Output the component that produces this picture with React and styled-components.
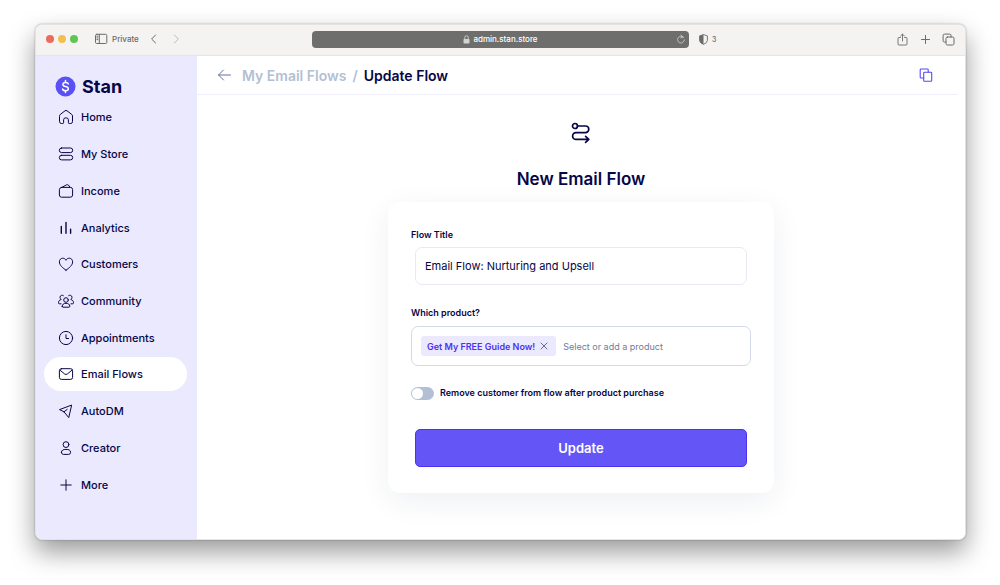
import React, { useState } from "react";
import styled, { createGlobalStyle } from "styled-components";

const GlobalStyle = createGlobalStyle`
  * {
    box-sizing: border-box;
  }

  body {
    margin: 0;
    background: #fff;
    color: #060648;
    font-family: Inter, "Liberation Sans", sans-serif;
  }

  button, input {
    font-family: inherit;
  }
`;

const Desktop = styled.div`
  min-height: 100vh;
  padding: 24px 34px 45px 35px;
`;

const BrowserWindow = styled.div`
  border: 1px solid #e3e3e3;
  border-radius: 7px;
  overflow: hidden;
  background: #fff;
  box-shadow: 0 0 2px rgba(0, 0, 0, 0.3), 0 12px 26px rgba(0, 0, 0, 0.4);
`;

const Toolbar = styled.div`
  display: grid;
  grid-template-columns: 1fr 377px 1fr;
  align-items: center;
  height: 31px;
  padding-bottom: 2px;
  background: #f4f3f1;
  border-bottom: 1px solid #e6e5e3;
`;

const ToolbarSide = styled.div`
  display: flex;
  align-items: center;
  justify-content: ${(props) => (props.$split ? "space-between" : "flex-start")};
  padding: 0 10px;
  color: #6b6b69;
`;

const Lights = styled.div`
  display: flex;
  gap: 4px;
  margin-right: 16px;
`;

const Light = styled.span`
  width: 8px;
  height: 8px;
  border-radius: 50%;
  background: ${(props) => props.$color};
`;

const ToolButton = styled.button`
  display: flex;
  align-items: center;
  padding: 0;
  border: 0;
  background: none;
  color: ${(props) => props.$color || "#6b6b69"};
`;

const PrivateLabel = styled.span`
  margin: 0 10px 0 4px;
  font-size: 8px;
  font-weight: 500;
`;

const ToolGroup = styled.div`
  display: flex;
  align-items: center;
  gap: ${(props) => props.$gap}px;
`;

const Tracker = styled.span`
  font-size: 7px;
  font-weight: 500;
`;

const AddressBar = styled.div`
  display: grid;
  grid-template-columns: 13px 1fr 13px;
  align-items: center;
  height: 17px;
  border-radius: 4px;
  background: #6e6e6c;
  color: #fff;
`;

const Address = styled.span`
  display: flex;
  align-items: center;
  justify-content: center;
  gap: 3px;
  font-size: 8px;
  font-weight: 500;
`;

const Layout = styled.div`
  display: grid;
  grid-template-columns: 161px 1fr;
`;

const Sidebar = styled.aside`
  padding: 18px 10px 36px 8px;
  background: #ebe9fd;
`;

const Brand = styled.a`
  display: flex;
  align-items: center;
  gap: 6px;
  height: 25px;
  margin-left: 11px;
  color: inherit;
  font-size: 18px;
  font-weight: 700;
  text-decoration: none;
`;

const NavList = styled.nav`
  display: grid;
  grid-auto-rows: 1fr;
  align-items: center;
  height: 404px;
`;

const NavItem = styled.a`
  display: flex;
  align-items: center;
  gap: 7px;
  height: 34px;
  padding-left: 14px;
  border-radius: 17px;
  background: ${(props) => (props.$active ? "#fff" : "transparent")};
  color: #060648;
  font-size: 11px;
  font-weight: 500;
  text-decoration: none;
`;

const Main = styled.main`
  display: flex;
  flex-direction: column;
  background: #fff;
`;

const Header = styled.header`
  display: flex;
  align-items: center;
  justify-content: space-between;
  height: 39px;
  margin-right: 7px;
  padding: 0 25px 0 20px;
  border-bottom: 1px solid #f0effb;
`;

const Breadcrumb = styled.nav`
  display: flex;
  align-items: center;
  gap: 6px;
  color: #b3bfd3;
  font-size: 14px;
  font-weight: 600;

  a {
    color: inherit;
    text-decoration: none;
  }

  b {
    color: #060648;
    font-weight: 600;
  }
`;

const BackLink = styled.a`
  display: flex;
  margin-right: 4px;
`;

const Content = styled.div`
  display: flex;
  flex-direction: column;
  align-items: center;
  padding: 26px 20px 40px;
`;

const Title = styled.h1`
  margin: 22px 0 11px;
  font-size: 17px;
  line-height: 24px;
  font-weight: 600;
`;

const Card = styled.form`
  width: 100%;
  max-width: 386px;
  padding: 26px 23px;
  border-radius: 12px;
  background: #fff;
  box-shadow: 0 8px 30px rgba(30, 40, 90, 0.07);
`;

const Label = styled.label`
  display: block;
  font-size: 9px;
  line-height: 14px;
  font-weight: 600;
`;

const TitleInput = styled.input`
  display: block;
  width: calc(100% - 8px);
  height: 38px;
  margin: 5px 4px 21px;
  padding: 0 9px;
  border: 1px solid #e9e9f3;
  border-radius: 7px;
  background: #fff;
  color: #060648;
  font-size: 11px;
  outline: none;
`;

const ProductBox = styled.div`
  display: flex;
  align-items: center;
  gap: 7px;
  height: 40px;
  margin: 6px 0 20px;
  padding: 0 9px;
  border: 1px solid #d3d9e8;
  border-radius: 7px;
`;

const Tag = styled.span`
  display: flex;
  align-items: center;
  gap: 5px;
  height: 20px;
  padding: 0 8px 0 6px;
  border-radius: 3px;
  background: #ebe9fd;
  color: #4b31f2;
  font-size: 9px;
  font-weight: 600;
  white-space: nowrap;
`;

const ProductInput = styled.input`
  flex: 1;
  min-width: 0;
  padding: 0;
  border: 0;
  background: none;
  font-size: 9px;
  outline: none;

  &::placeholder {
    color: #737a9c;
    opacity: 1;
  }
`;

const SwitchRow = styled.div`
  display: flex;
  align-items: center;
  gap: 6px;
  height: 14px;
`;

const Switch = styled.input`
  appearance: none;
  display: flex;
  align-items: center;
  width: 23px;
  height: 13px;
  margin: 0;
  padding: 0 1px;
  border-radius: 7px;
  background: #b3c0d4;

  &::before {
    content: "";
    width: 11px;
    height: 11px;
    border-radius: 50%;
    background: #fff;
  }

  &:checked {
    justify-content: flex-end;
    background: #6355f6;
  }
`;

const UpdateButton = styled.button`
  display: block;
  width: calc(100% - 8px);
  height: 38px;
  margin: 29px 4px 0;
  border: 1px solid #4b31f2;
  border-radius: 5px;
  background: #6355f6;
  color: #fff;
  font-size: 13px;
  font-weight: 600;
`;

const Svg = ({ size = 16, width = 1, box = 16, children }) => (
  <svg
    width={size}
    height={size}
    viewBox={`0 0 ${box} ${box}`}
    fill="none"
    stroke="currentColor"
    strokeWidth={width}
    strokeLinecap="round"
    strokeLinejoin="round"
    aria-hidden="true"
  >
    {children}
  </svg>
);

const navItems = [
  {
    name: "Home",
    icon: <path d="M1.5 7 Q1.5 6 2.3 5.4 L7 1.8 Q8 1.1 9 1.8 L13.7 5.4 Q14.5 6 14.5 7 V12.6 Q14.5 14.5 12.6 14.5 H11.2 Q10.4 14.5 10.4 13.7 V10.8 Q10.4 8.8 8 8.8 T5.6 10.8 V13.7 Q5.6 14.5 4.8 14.5 H3.4 Q1.5 14.5 1.5 12.6Z" />,
  },
  {
    name: "My Store",
    icon: (
      <>
        <rect x="1.3" y="2" width="13.4" height="4.6" rx="2.3" />
        <rect x="1.3" y="9.3" width="13.4" height="4.6" rx="2.3" />
      </>
    ),
  },
  {
    name: "Income",
    icon: (
      <>
        <rect x="1.4" y="4.4" width="13.2" height="9.8" rx="2.2" />
        <path d="M4.2 4.2 L8.6 1.8 Q9.5 1.4 10.4 2 L12 4.2" />
      </>
    ),
  },
  { name: "Analytics", icon: <path d="M3.3 6.4v6.8M8 2.5v10.7M12.6 9.3v3.9" strokeWidth="1.4" /> },
  {
    name: "Customers",
    icon: <path d="M8 14.2C5 12 1.4 9.4 1.4 5.8C1.4 3.7 2.8 2.2 4.7 2.2C6.2 2.2 7.4 3 8 4.3C8.6 3 9.8 2.2 11.3 2.2C13.2 2.2 14.6 3.7 14.6 5.8C14.6 9.4 11 12 8 14.2Z" />,
  },
  {
    name: "Community",
    icon: (
      <>
        <circle cx="8" cy="7" r="2.3" />
        <path d="M4.2 13.4C4.2 11.2 5.8 10.3 8 10.3S11.8 11.2 11.8 13.4Q11.8 14.2 11 14.2H5Q4.2 14.2 4.2 13.4Z" />
        <path d="M5.4 2.6C4.2 1.7 2 2.3 2 4.3C2 5.4 2.6 6 3.2 6.5C1.5 7 .5 8 .5 9.8Q.5 10.8 1.5 10.8H3" />
        <path d="M10.6 2.6C11.8 1.7 14 2.3 14 4.3C14 5.4 13.4 6 12.8 6.5C14.5 7 15.5 8 15.5 9.8Q15.5 10.8 14.5 10.8H13" />
      </>
    ),
  },
  {
    name: "Appointments",
    icon: (
      <>
        <circle cx="8" cy="8" r="6.6" />
        <path d="M8 4.8V8.5H10.6" />
      </>
    ),
  },
  {
    name: "Email Flows",
    icon: (
      <>
        <rect x="1.4" y="2.7" width="13.2" height="10.7" rx="2" />
        <path d="M2 4.2L6.7 8Q8 9 9.3 8L14 4.2" />
      </>
    ),
  },
  {
    name: "AutoDM",
    icon: <path d="M13.3 2.2L1.5 6.6L6 8.8L10.5 14.3ZM6 8.8L9.2 6.4" />,
  },
  {
    name: "Creator",
    icon: (
      <>
        <circle cx="8" cy="4.6" r="2.9" />
        <path d="M3.4 12.3C3.4 10 5.4 9.4 8 9.4S12.6 10 12.6 12.3Q12.6 14.4 10.6 14.4H5.4Q3.4 14.4 3.4 12.3Z" />
      </>
    ),
  },
  { name: "More", icon: <path d="M2.8 8H13.2M8 2.8V13.2" /> },
];

function BrowserBar() {
  return (
    <Toolbar>
      <ToolbarSide>
        <Lights>
          <Light $color="#ed6a5f" />
          <Light $color="#f5bf4f" />
          <Light $color="#61c554" />
        </Lights>
        <ToolButton aria-label="Show sidebar">
          <Svg size={14} box={14} width={1}>
            <rect x="1.5" y="2.3" width="11.3" height="9.2" rx="1.2" />
            <path d="M5.3 2.3v9.2M2.9 4.2h1M2.9 5.9h1M2.9 7.6h1" />
          </Svg>
        </ToolButton>
        <PrivateLabel>Private</PrivateLabel>
        <ToolGroup $gap={12}>
          <ToolButton aria-label="Back">
            <Svg size={10} box={10}>
              <path d="M6.6 1L2.6 5L6.6 9" />
            </Svg>
          </ToolButton>
          <ToolButton aria-label="Forward" $color="#b9b9b7">
            <Svg size={10} box={10}>
              <path d="M3.4 1L7.4 5L3.4 9" />
            </Svg>
          </ToolButton>
        </ToolGroup>
      </ToolbarSide>

      <AddressBar>
        <span />
        <Address>
          <svg width="7" height="9" viewBox="0 0 7 9" aria-hidden="true">
            <rect x="0.5" y="4" width="6" height="4.5" rx="0.8" fill="#d2d2d1" />
            <path d="M1.8 4V2.4a1.7 1.7 0 0 1 3.4 0V4" fill="none" stroke="#d2d2d1" strokeWidth="0.9" />
          </svg>
          admin.stan.store
        </Address>
        <ToolButton aria-label="Reload" $color="#c4c4c2">
          <Svg size={10} box={10} width={0.9}>
            <path d="M7.4 3.2A3.4 3.4 0 1 0 8.4 5.8M4.9 1L7.4 3.2L4.7 3.8" />
          </Svg>
        </ToolButton>
      </AddressBar>

      <ToolbarSide $split>
        <ToolGroup $gap={4}>
          <svg width="9" height="11" viewBox="0 0 9 11" aria-hidden="true">
            <path d="M4.5 .6L8.4 1.9V6.5Q8.2 9 4.5 10.4Q.8 9 .6 6.5V1.9Z" fill="none" stroke="#6b6b69" strokeWidth="0.9" />
            <path d="M4.5 .6V10.4Q.8 9 .6 6.5V1.9Z" fill="#6b6b69" />
          </svg>
          <Tracker>3</Tracker>
        </ToolGroup>
        <ToolGroup $gap={10}>
          <ToolButton aria-label="Share">
            <Svg size={13} box={13} width={0.9}>
              <path d="M4.4 4.5H3Q2 4.5 2 5.5V11Q2 12 3 12H10Q11 12 11 11V5.5Q11 4.5 10 4.5H8.6M6.5 8V1.2M4.6 3L6.5 1.1L8.4 3" />
            </Svg>
          </ToolButton>
          <ToolButton aria-label="New tab">
            <Svg size={13} box={13} width={1}>
              <path d="M2.5 6.5H10.5M6.5 2.5V10.5" />
            </Svg>
          </ToolButton>
          <ToolButton aria-label="Tab overview">
            <Svg size={13} box={13} width={1}>
              <rect x="4" y="4" width="8" height="8" rx="1.4" />
              <path d="M4 9H2.4Q1.1 9 1.1 7.8V2.4Q1.1 1.1 2.4 1.1H7.8Q9 1.1 9 2.4V4" />
            </Svg>
          </ToolButton>
        </ToolGroup>
      </ToolbarSide>
    </Toolbar>
  );
}

function SideMenu() {
  return (
    <Sidebar>
      <Brand href="#home">
        <svg width="21" height="21" viewBox="0 0 21 21" aria-hidden="true">
          <circle cx="10.5" cy="10.5" r="10" fill="#5a50f5" />
          <path
            d="M13.3 7.9Q13 6.4 10.6 6.4Q7.9 6.4 7.9 8.4Q7.9 10 10.5 10.5Q13.3 11 13.3 12.7Q13.3 14.7 10.6 14.7Q7.9 14.7 7.6 13M10.5 4.6V6.4M10.5 14.7V16.4"
            fill="none"
            stroke="#fff"
            strokeWidth="1.5"
            strokeLinecap="round"
          />
        </svg>
        Stan
      </Brand>
      <NavList>
        {navItems.map((item) => (
          <NavItem key={item.name} href="#menu" $active={item.name === "Email Flows"}>
            <Svg>{item.icon}</Svg>
            {item.name}
          </NavItem>
        ))}
      </NavList>
    </Sidebar>
  );
}

function FlowForm() {
  const [title, setTitle] = useState("Email Flow: Nurturing and Upsell");

  return (
    <Card onSubmit={(e) => e.preventDefault()}>
      <Label htmlFor="title">Flow Title</Label>
      <TitleInput id="title" value={title} onChange={(e) => setTitle(e.target.value)} />

      <Label htmlFor="product">Which product?</Label>
      <ProductBox>
        <Tag>
          Get My FREE Guide Now!
          <ToolButton type="button" aria-label="Remove product" $color="#646b95">
            <Svg size={8} box={8} width={1}>
              <path d="M1 1L7 7M7 1L1 7" />
            </Svg>
          </ToolButton>
        </Tag>
        <ProductInput id="product" placeholder="Select or add a product" />
      </ProductBox>

      <SwitchRow>
        <Switch id="remove" type="checkbox" />
        <Label htmlFor="remove">Remove customer from flow after product purchase</Label>
      </SwitchRow>

      <UpdateButton type="submit">Update</UpdateButton>
    </Card>
  );
}

function App() {
  return (
    <>
      <GlobalStyle />
      <Desktop>
        <BrowserWindow>
          <BrowserBar />
          <Layout>
            <SideMenu />
            <Main>
              <Header>
                <Breadcrumb>
                  <BackLink href="#back" aria-label="Back to flows">
                    <svg width="15" height="14" viewBox="0 0 15 14" fill="none" stroke="#68719d" strokeLinecap="round" strokeLinejoin="round" aria-hidden="true">
                      <path d="M13.5 7H1.5M6.5 2L1.5 7L6.5 12" />
                    </svg>
                  </BackLink>
                  <a href="#flows">My Email Flows</a>
                  <span>/</span>
                  <b>Update Flow</b>
                </Breadcrumb>
                <ToolButton aria-label="Copy flow" $color="#5748f4">
                  <Svg size={14} box={14} width={1.1}>
                    <rect x="4.7" y="4.2" width="8" height="9" rx="0.8" />
                    <path d="M4.7 10H2Q1.2 10 1.2 9.2V1.8Q1.2 1 2 1H8.4Q9.2 1 9.2 1.8V4.2" />
                  </Svg>
                </ToolButton>
              </Header>

              <Content>
                <Svg size={24} box={24} width={1.7}>
                  <circle cx="6" cy="5" r="2.5" />
                  <path d="M8.5 5H16.5A3.3 3.3 0 0 1 16.5 11.6H7A3.4 3.4 0 0 0 7 18.4H19.5M16.6 15.4L19.8 18.4L16.6 21.4" />
                </Svg>
                <Title>New Email Flow</Title>
                <FlowForm />
              </Content>
            </Main>
          </Layout>
        </BrowserWindow>
      </Desktop>
    </>
  );
}

export default App;
